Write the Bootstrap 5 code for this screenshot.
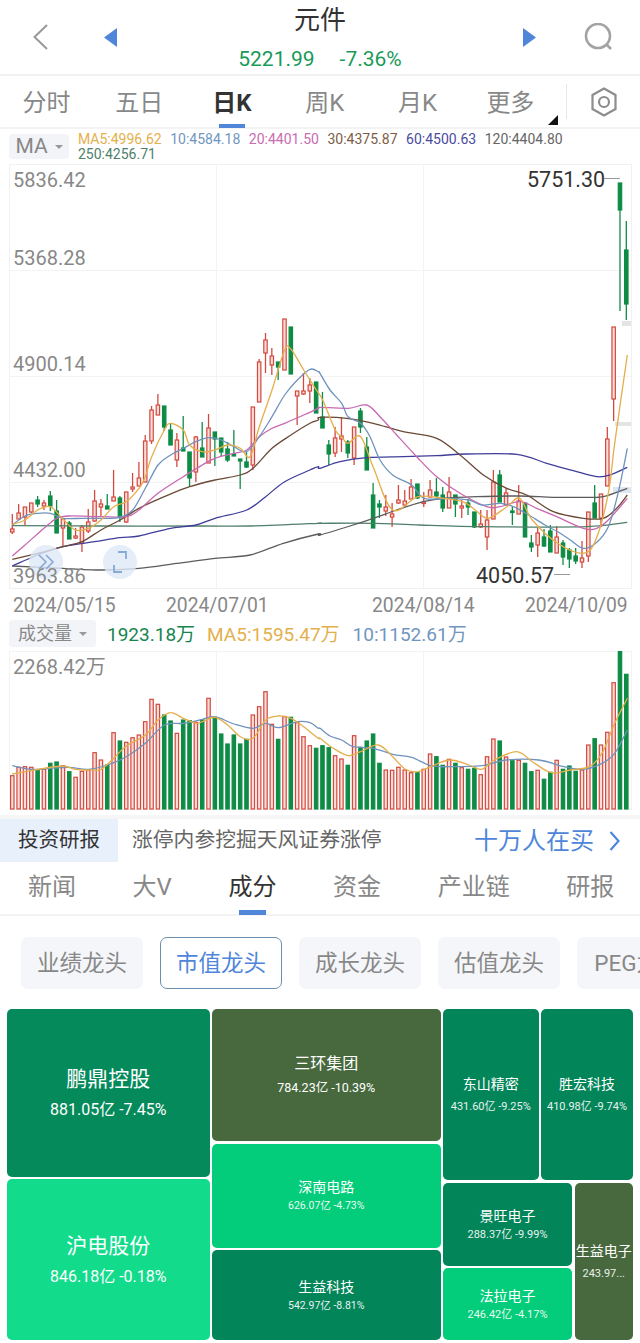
<!DOCTYPE html>
<html lang="zh">
<head>
    <meta charset="UTF-8">
    <meta name="viewport" content="width=device-width, initial-scale=1.0">
    <title>元件 - 日K</title>
    <link href="https://cdn.jsdelivr.net/npm/bootstrap@5.3.0/dist/css/bootstrap.min.css" rel="stylesheet">
    <style>
        html, body { width: 640px; height: 1343px; overflow: hidden; background: #fff; }
        body { font-family: Roboto, "Noto Sans CJK SC", sans-serif; color: #333; }

        .top-head { height: 76px; padding: 0 28px 0 33px; border-bottom: 2px solid #f1f1f1; }
        .top-mid { flex: 1 1 0; text-align: center; }
        .top-title { font-size: 26px; line-height: 30px; padding-top: 5px; }
        .top-quote { font-size: 21px; line-height: 24px; margin-top: 12px; color: #189a58; }
        .top-quote span + span { margin-left: 25px; }
        .tri-left { margin-left: 56px; }
        .search-ico { margin-left: 48px; }

        .period-row { height: 53px; border-bottom: 2px solid #f3f3f3; }
        .period-tab { width: 92.8px; height: 51px; line-height: 54px; text-align: center; font-size: 24px; color: #888; position: relative; }
        .period-on { color: #333; font-weight: 700; }
        .period-on::after { content: ""; position: absolute; left: 33px; bottom: -1px; width: 26px; height: 4px; background: #4f86d9; }
        .period-more::after { content: ""; position: absolute; right: -1px; bottom: 2px; border-style: solid; border-width: 0 0 10px 10px; border-color: transparent transparent #111 transparent; }
        .period-sep { width: 1px; height: 35px; margin-left: 9px; background: #e8e8e8; }
        .hex-ico { margin-left: 24px; }

        .ma-row { height: 35px; padding: 5px 0 0 9px; }
        .pick-btn { background: #f3f4f8; border-radius: 4px; color: #888; display: flex; align-items: center; justify-content: center; gap: 7px; }
        .pick-ma { width: 60px; height: 25px; font-size: 21px; }
        .pick-caret { width: 0; height: 0; border-style: solid; border-width: 4px 4px 0 4px; border-color: #999 transparent transparent transparent; }
        .ma-vals { width: 540px; margin-left: 9px; column-gap: 8.6px; font-size: 14px; line-height: 15px; margin-top: -2px; }
        .c-ma5 { color: #e3b04b; } .c-ma10 { color: #7096bf; } .c-ma20 { color: #c96cb2; }
        .c-ma30 { color: #7d5d47; } .c-ma60 { color: #4b4ba0; } .c-ma120 { color: #666; } .c-ma250 { color: #4f7f6a; }

        .chart-svg { display: block; width: 640px; }
        .chart-main { height: 425px; }
        .chart-vol { height: 159px; }
        .axis-txt { font-size: 20px; fill: #888; }
        .mark-txt { font-size: 21.5px; fill: #333; }

        .date-row { height: 30px; line-height: 34px; padding-left: 13px; font-size: 19.3px; color: #888; display: grid; grid-template-columns: 153px 206px 153px 1fr; }

        .vol-row { height: 32px; padding-left: 9px; font-size: 19px; line-height: 31px; }
        .pick-vol { width: 87px; height: 27px; font-size: 18px; margin: 1px 11px 0 0; }
        .vol-row .c-now { color: #18854f; margin-right: 12px; }
        .vol-row .c-ma5 { margin-right: 13px; }

        .promo-row { height: 47px; margin-top: 5px; border-top: 4px solid #f6f6f6; font-size: 20.8px; }
        .promo-tag { width: 118px; height: 43px; padding-left: 18px; line-height: 42px; background: #e8f0fb; color: #333; font-size: 20.5px; }
        .promo-txt { padding-left: 14px; color: #666; flex: 1 1 0; }
        .promo-buy { color: #4f86d9; font-size: 24px; margin-right: 20px; gap: 15px; }

        .sub-tabs { height: 54px; padding-left: 28px; gap: 56.6px; font-size: 24px; color: #888; line-height: 50px; border-bottom: 2px solid #f3f3f3; white-space: nowrap; }
        .sub-tab { position: relative; height: 52px; }
        .sub-on { color: #333; }
        .sub-on::after { content: ""; position: absolute; left: 11px; bottom: -1px; width: 27px; height: 5px; background: #4f86d9; }

        .chip-row { height: 93px; padding: 21px 0 0 21px; gap: 17px; overflow: hidden; }
        .chip { flex: 0 0 122px; height: 52px; line-height: 52px; text-align: center; font-size: 22.5px; color: #888; background: #f5f6f9; border-radius: 7px; white-space: nowrap; overflow: hidden; }
        .chip-on { color: #4f86d9; background: #fff; border: 1px solid #6b8fae; line-height: 50px; }

        .tree-map { height: 331px; padding-left: 7px; gap: 2.5px; }
        .tree-col { gap: 2.5px; }
        .col-a { width: 202.5px; } .col-b { width: 228.5px; } .col-c { width: 190px; }
        .tree-pair { gap: 2.5px; }
        .cell { border-radius: 5px; color: #fff; text-align: center; white-space: nowrap; overflow: hidden; }
        .cell b { font-weight: 400; display: block; }
        .cell i { font-style: normal; display: block; }
        .sz-lg b { font-size: 21px; line-height: 26px; margin-bottom: 8px; }
        .sz-lg i { font-size: 16px; line-height: 20px; }
        .sz-md b { font-size: 16px; line-height: 20px; margin-bottom: 6px; }
        .sz-md i { font-size: 12.5px; line-height: 16px; }
        .sz-sm b { font-size: 14px; line-height: 18px; margin-bottom: 3px; }
        .sz-sm i { font-size: 11px; line-height: 14px; opacity: .9; }
        .sz-sm.gap-wide b { margin-bottom: 7px; }
        .sz-sm.sub-tiny i { font-size: 10.5px; }
        .bg-deep { background: #048a5b; }
        .bg-deep2 { background: #03855a; }
        .bg-bright { background: #12dc8c; }
        .bg-mid { background: #03cd7a; }
        .bg-olive { background: #47693d; }
        .h-a1 { height: 167.5px; } .h-a2 { height: 161px; }
        .h-b1 { height: 132px; } .h-b2 { height: 104px; } .h-b3 { height: 90px; }
        .h-c1 { height: 171px; } .h-c2 { height: 157.5px; }
        .h-d1 { height: 83px; } .h-d2 { height: 72px; }
        .w-e1 { width: 95.5px; } .w-e2 { width: 92px; }
        .w-f1 { width: 129px; } .w-f2 { width: 58.5px; }
    </style>
</head>
<body>
    <!-- Header -->
    <header class="top-head d-flex align-items-center">
        <svg width="15" height="26" viewBox="0 0 15 26"><polyline points="14,1 1.5,13 14,25" fill="none" stroke="#999" stroke-width="2"/></svg>
        <svg class="tri-left" width="13" height="19" viewBox="0 0 13 19"><polygon points="13,0 13,19 0,9.5" fill="#4f86d9"/></svg>
        <div class="top-mid align-self-start">
            <div class="top-title">元件</div>
            <div class="top-quote"><span>5221.99</span><span>-7.36%</span></div>
        </div>
        <svg width="13" height="19" viewBox="0 0 13 19"><polygon points="0,0 0,19 13,9.5" fill="#4f86d9"/></svg>
        <svg class="search-ico" width="28" height="28" viewBox="0 0 28 28"><circle cx="14" cy="13" r="12" fill="none" stroke="#a3a3a3" stroke-width="2.6"/><path d="M22 21l5 5" stroke="#a3a3a3" stroke-width="2.6"/></svg>
    </header>

    <!-- Period tabs -->
    <div class="period-row d-flex align-items-center">
        <div class="period-tab">分时</div>
        <div class="period-tab">五日</div>
        <div class="period-tab period-on">日K</div>
        <div class="period-tab">周K</div>
        <div class="period-tab">月K</div>
        <div class="period-tab period-more">更多</div>
        <div class="period-sep"></div>
        <svg class="hex-ico" width="26" height="30" viewBox="0 0 26 30"><polygon points="13,1.5 24.5,8 24.5,22 13,28.5 1.5,22 1.5,8" fill="none" stroke="#8d8d8d" stroke-width="2.2"/><circle cx="13" cy="15" r="5" fill="none" stroke="#8d8d8d" stroke-width="2.2"/></svg>
    </div>

    <!-- MA -->
    <div class="ma-row d-flex align-items-start">
        <div class="pick-btn pick-ma">MA<span class="pick-caret"></span></div>
        <div class="ma-vals d-flex flex-wrap">
            <span class="c-ma5">MA5:4996.62</span>
            <span class="c-ma10">10:4584.18</span>
            <span class="c-ma20">20:4401.50</span>
            <span class="c-ma30">30:4375.87</span>
            <span class="c-ma60">60:4500.63</span>
            <span class="c-ma120">120:4404.80</span>
            <span class="c-ma250">250:4256.71</span>
        </div>
    </div>

    <!-- K chart -->
    <svg id="kline" class="chart-svg chart-main" viewBox="0 164 640 425">
        <rect x="9.5" y="164.5" width="622" height="424" fill="#fff" stroke="#f1f1f1"/>
        <path d="M9 270.5H631M9 376.5H631M9 482.5H631M216.5 164V588M423.5 164V588" stroke="#f3f3f3" fill="none"/>
        <rect x="622" y="321" width="9" height="5" fill="#e4e4e4"/>
        <rect x="615" y="422" width="16" height="4" fill="#e4e4e4"/>
        <rect x="613" y="487" width="18" height="6" fill="#dfe6f2"/>
        <g id="kline-bars"></g>
        <g id="kline-lines"></g>
        <circle cx="46" cy="562" r="17" fill="#dfe9f8" fill-opacity=".8"/>
        <path d="M39 555l7 7-7 7M46 555l7 7-7 7" fill="none" stroke="#86a9d6" stroke-width="1.6"/>
        <circle cx="120" cy="562" r="17" fill="#dfe9f8" fill-opacity=".8"/>
        <path d="M114 565v7h8M126 559v-7h-8" fill="none" stroke="#86a9d6" stroke-width="1.8"/>
        <text class="axis-txt" x="13" y="187">5836.42</text>
        <text class="axis-txt" x="13" y="265">5368.28</text>
        <text class="axis-txt" x="13" y="371">4900.14</text>
        <text class="axis-txt" x="13" y="477">4432.00</text>
        <text class="axis-txt" x="13" y="583">3963.86</text>
        <text class="mark-txt" x="527" y="187">5751.30</text>
        <path d="M604 178.5H620" stroke="#999"/>
        <text class="mark-txt" x="476" y="583">4050.57</text>
        <path d="M554 574.5H570" stroke="#999"/>
    </svg>
    <div class="date-row">
        <span>2024/05/15</span><span>2024/07/01</span><span>2024/08/14</span><span>2024/10/09</span>
    </div>

    <!-- Volume -->
    <div class="vol-row d-flex align-items-start">
        <div class="pick-btn pick-vol">成交量<span class="pick-caret"></span></div>
        <span class="c-now">1923.18万</span>
        <span class="c-ma5">MA5:1595.47万</span>
        <span class="c-ma10">10:1152.61万</span>
    </div>
    <svg id="vol" class="chart-svg chart-vol" viewBox="0 651 640 159">
        <rect x="9.5" y="651.5" width="622" height="158" fill="#fff" stroke="#f3f3f3"/>
        <path d="M216.5 651V809M423.5 651V809" stroke="#f3f3f3" fill="none"/>
        <g id="vol-bars"></g>
        <g id="vol-lines"></g>
        <text class="axis-txt" x="13" y="674">2268.42万</text>
    </svg>

    <!-- Promo -->
    <div class="promo-row d-flex align-items-center">
        <div class="promo-tag">投资研报</div>
        <div class="promo-txt">涨停内参挖掘天风证券涨停</div>
        <div class="promo-buy d-flex align-items-center">十万人在买
            <svg width="11" height="20" viewBox="0 0 11 20"><polyline points="1.5,1 9.5,10 1.5,19" fill="none" stroke="#4f86d9" stroke-width="2.2"/></svg>
        </div>
    </div>

    <!-- Sub tabs -->
    <div class="sub-tabs d-flex">
        <div class="sub-tab">新闻</div>
        <div class="sub-tab">大V</div>
        <div class="sub-tab sub-on">成分</div>
        <div class="sub-tab">资金</div>
        <div class="sub-tab">产业链</div>
        <div class="sub-tab">研报</div>
    </div>

    <!-- Chips -->
    <div class="chip-row d-flex">
        <div class="chip">业绩龙头</div>
        <div class="chip chip-on">市值龙头</div>
        <div class="chip">成长龙头</div>
        <div class="chip">估值龙头</div>
        <div class="chip">PEG龙头</div>
    </div>

    <!-- Treemap -->
    <div class="tree-map d-flex">
        <div class="tree-col col-a d-flex flex-column">
            <div class="cell sz-lg bg-deep h-a1 d-flex flex-column justify-content-center"><b>鹏鼎控股</b><i>881.05亿 -7.45%</i></div>
            <div class="cell sz-lg bg-bright h-a2 d-flex flex-column justify-content-center"><b>沪电股份</b><i>846.18亿 -0.18%</i></div>
        </div>
        <div class="tree-col col-b d-flex flex-column">
            <div class="cell sz-md bg-olive h-b1 d-flex flex-column justify-content-center"><b>三环集团</b><i>784.23亿 -10.39%</i></div>
            <div class="cell sz-sm sub-tiny bg-mid h-b2 d-flex flex-column justify-content-center"><b>深南电路</b><i>626.07亿 -4.73%</i></div>
            <div class="cell sz-sm sub-tiny bg-deep2 h-b3 d-flex flex-column justify-content-center"><b>生益科技</b><i>542.97亿 -8.81%</i></div>
        </div>
        <div class="tree-col col-c d-flex flex-column">
            <div class="tree-pair h-c1 d-flex">
                <div class="cell sz-sm gap-wide bg-deep2 w-e1 d-flex flex-column justify-content-center"><b>东山精密</b><i>431.60亿 -9.25%</i></div>
                <div class="cell sz-sm gap-wide bg-deep2 w-e2 d-flex flex-column justify-content-center"><b>胜宏科技</b><i>410.98亿 -9.74%</i></div>
            </div>
            <div class="tree-pair h-c2 d-flex">
                <div class="tree-col w-f1 d-flex flex-column">
                    <div class="cell sz-sm bg-deep2 h-d1 d-flex flex-column justify-content-center"><b>景旺电子</b><i>288.37亿 -9.99%</i></div>
                    <div class="cell sz-sm bg-mid h-d2 d-flex flex-column justify-content-center"><b>法拉电子</b><i>246.42亿 -4.17%</i></div>
                </div>
                <div class="cell sz-sm gap-wide bg-olive w-f2 d-flex flex-column justify-content-center"><b>生益电子</b><i>243.97...</i></div>
            </div>
        </div>
    </div>

    <script src="https://cdn.jsdelivr.net/npm/bootstrap@5.3.0/dist/js/bootstrap.bundle.min.js"></script>
    <script>
        const RED = '#d2493f', PINK = '#fbdcd6', GREEN = '#0e8c46';
        const xOf = i => 12.3 + 6.33 * i;

        // [r/g, wick top, body top, body bottom, wick bottom]
        const candles = [
            ['r',514,529,532,534],['r',504,513,519,519],['r',507,507,517,525],['r',503,503,512,513],['g',496,500,504,507],
            ['r',500,503,506,510],['g',491,496,506,511],['g',500,511,533,533],['r',519,519,528,546],['g',521,523,539,539],
            ['r',528,536,538,539],['r',525,527,543,552],['r',509,522,531,533],['r',490,501,521,522],['r',499,504,507,517],
            ['g',494,506,509,509],['r',470,497,501,501],['g',496,498,517,522],['r',492,492,522,523],['r',473,487,489,492],
            ['r',462,478,486,486],['r',435,441,482,482],['r',406,410,441,444],['r',394,405,415,415],['g',406,406,427,431],
            ['g',423,430,445,445],['r',433,440,460,467],['g',416,448,451,451],['g',452,452,478,486],['r',436,437,472,482],
            ['g',422,448,457,457],['r',414,428,463,463],['g',432,432,439,466],['g',438,438,452,456],['g',442,449,460,462],
            ['g',430,454,456,456],['g',459,459,461,489],['g',452,462,467,468],['r',407,407,465,470],['r',359,362,402,402],
            ['r',333,340,353,373],['r',348,356,365,375],['g',362,362,367,380],['r',319,319,370,370],['g',327,327,374,374],
            ['r',391,391,396,425],['r',373,391,394,395],['r',378,385,391,403],['g',382,382,413,413],['g',392,417,428,428],
            ['g',440,445,454,465],['r',427,438,453,457],['r',417,436,439,452],['g',440,442,453,458],['r',427,427,458,465],
            ['g',408,411,427,433],['g',437,447,470,470],['g',483,495,528,528],['g',500,504,507,518],['r',495,507,511,516],
            ['r',503,514,517,527],['r',485,500,503,504],['r',490,501,505,507],['r',479,487,499,499],['g',484,484,498,499],
            ['r',492,502,503,507],['r',480,490,497,497],['g',478,492,496,497],['g',487,495,508,512],['r',477,492,508,508],
            ['g',495,495,504,517],['r',500,506,508,518],['g',499,503,507,515],['g',512,512,527,528],['r',510,524,527,528],
            ['r',510,520,537,550],['r',470,482,519,519],['g',470,475,502,502],['r',488,493,505,505],['g',507,511,512,525],
            ['r',485,501,514,514],['g',503,503,537,537],['g',535,543,547,552],['r',528,533,545,557],['g',529,537,546,547],
            ['g',525,531,552,552],['r',526,537,553,553],['g',540,543,557,565],['g',548,550,559,568],['g',548,556,561,564],
            ['r',541,558,562,568],['r',512,512,556,562],['g',485,503,518,518],['r',494,494,518,527],['r',427,439,486,486],
            ['r',327,327,399,421],['g',183,183,210,311],['g',221,250,304,320]
        ];

        const volTops = [
            775.7,767.3,766.7,767.3,770.7,769.3,763.3,762,765.7,771.7,777.3,771.3,770,752.7,760,765,732.7,741,742.3,737.7,
            735,721.7,699.3,704.3,715,721,733.3,720,720.7,722.3,720,698.3,717.3,734,744,735,744,739.3,715,706.7,
            691.7,724.3,739.3,716.7,717.3,722.7,736.7,745.7,748.3,745.7,747.7,755.7,759,765.3,735.7,747.3,741,734,763.3,770,
            770.3,767.3,770,772.7,772.7,769.3,754,756.7,765.3,759.3,763.3,767.7,769.3,768.3,774.7,756.7,739,741,757,760.7,
            760.3,763.3,771.7,770.3,779.3,772.3,760.3,769.3,766,771.3,770,745,738.7,745,732.3,682.7,650.7,674.3
        ];

        // line points were read from 3x crops, left and right half
        const kL = pts => pts.map(p => [p[0] / 3, 280 + p[1] / 3]);
        const kR = pts => pts.map(p => [320 + p[0] / 3, 160 + p[1] / 3]);
        const vL = pts => pts.map(p => [p[0] / 3, 610 + p[1] / 3]);
        const vR = pts => pts.map(p => [320 + p[0] / 3, 610 + p[1] / 3]);

        const kLines = [
            ['#4f7f6a', [...kL([[37,737],[300,738],[600,738],[750,738],[955,730]]), ...kR([[0,1090],[160,1090],[300,1095],[500,1100],[800,1100],[922,1087]])]],
            ['#5c5c5c', [...kL([[37,858],[189,865],[303,870],[417,865],[530,850],[645,835],[750,825],[850,790],[955,762]]), ...kR([[0,1125],[90,1098],[160,1075],[230,1050],[310,1025],[370,1015],[470,1010],[600,1008],[700,1012],[800,1012],[850,1010],[922,985]])]],
            ['#3e3e9a', [...kL([[37,858],[113,825],[189,800],[284,785],[360,773],[417,768],[512,745],[588,735],[645,715],[740,690],[797,650],[854,605],[930,570],[955,560]]), ...kR([[0,925],[60,905],[140,893],[250,890],[350,887],[440,882],[590,883],[680,910],[760,932],[830,950],[870,945],[922,922]])]],
            ['#6b4a36', [...kL([[37,838],[113,820],[189,800],[246,785],[303,750],[360,720],[417,685],[493,650],[569,620],[645,600],[721,585],[759,565],[816,505],[873,465],[930,430],[955,420]]), ...kR([[0,772],[80,775],[160,790],[250,815],[350,835],[420,885],[490,945],[560,985],[620,1005],[700,1055],[790,1075],[850,1075],[890,1045],[922,1005]])]],
            ['#c868b0', [...kL([[37,828],[75,795],[132,745],[170,715],[208,708],[303,710],[379,710],[417,690],[474,640],[550,590],[607,555],[645,535],[702,520],[740,510],[778,470],[816,445],[854,430],[911,405],[955,385]]), ...kR([[0,742],[85,745],[140,735],[180,770],[230,825],[290,890],[350,950],[420,1000],[500,1040],[540,1040],[600,1025],[650,1045],[710,1070],[790,1105],[830,1105],[865,1080],[922,1015]])]],
            ['#6f93bd', [...kL([[37,735],[75,708],[113,700],[151,700],[189,715],[246,715],[303,715],[360,712],[398,690],[436,625],[474,555],[512,525],[550,505],[588,485],[626,473],[664,480],[702,500],[740,515],[778,470],[816,410],[854,345],[892,300],[930,268],[955,275]]), ...kR([[0,640],[30,690],[65,730],[84,770],[122,790],[150,830],[180,900],[218,945],[275,975],[313,1015],[389,1015],[447,1020],[485,1035],[542,1030],[580,1040],[618,1060],[675,1095],[713,1115],[751,1140],[789,1165],[827,1150],[865,1100],[894,1000],[922,865]])]],
            ['#e5ae4a', [...kL([[37,733],[75,720],[113,690],[151,680],[189,718],[227,750],[265,745],[303,720],[341,680],[379,665],[417,625],[436,590],[455,530],[493,450],[512,430],[550,450],[569,495],[607,515],[645,510],[683,495],[721,505],[750,530],[778,440],[816,330],[854,210],[873,208],[911,270],[949,330]]), ...kR([[8,720],[46,810],[65,830],[84,850],[122,830],[161,925],[218,1050],[294,1010],[370,1015],[428,1025],[466,1050],[504,1075],[561,1040],[599,1015],[637,1080],[713,1150],[789,1180],[827,1140],[865,1000],[884,850],[922,585]])]]
        ];

        const vLines = [
            ['#6f93bd', [...vL([[37,467],[94,478],[151,475],[208,472],[265,478],[322,465],[379,440],[436,400],[493,345],[550,340],[607,328],[645,320],[702,342],[759,355],[797,340],[835,353],[892,335],[930,338],[955,355]]), ...vR([[0,355],[30,378],[65,390],[100,410],[160,415],[218,433],[275,442],[332,467],[389,470],[485,467],[560,450],[656,450],[732,470],[789,478],[846,460],[884,430],[922,360]])]],
            ['#e5ae4a', [...vL([[37,492],[94,482],[132,475],[189,468],[227,478],[265,480],[303,478],[341,445],[379,408],[436,375],[474,330],[512,308],[550,325],[588,340],[607,335],[645,322],[683,345],[721,380],[759,385],[797,330],[835,318],[873,325],[911,350],[955,385]]), ...vR([[0,385],[40,415],[85,437],[122,425],[175,405],[218,440],[256,478],[294,485],[332,470],[389,450],[447,465],[485,478],[523,450],[590,425],[637,455],[694,488],[751,480],[808,470],[846,430],[884,340],[922,265]])]]
        ];

        // catmull-rom through the points, so the MA curves come out smooth
        function smoothPath(pts) {
            let d = `M${pts[0][0].toFixed(1)} ${pts[0][1].toFixed(1)}`;
            for (let i = 0; i < pts.length - 1; i++) {
                const p0 = pts[Math.max(i - 1, 0)], p1 = pts[i], p2 = pts[i + 1], p3 = pts[Math.min(i + 2, pts.length - 1)];
                const c1x = p1[0] + (p2[0] - p0[0]) / 6, c1y = p1[1] + (p2[1] - p0[1]) / 6;
                const c2x = p2[0] - (p3[0] - p1[0]) / 6, c2y = p2[1] - (p3[1] - p1[1]) / 6;
                d += `C${c1x.toFixed(1)} ${c1y.toFixed(1)} ${c2x.toFixed(1)} ${c2y.toFixed(1)} ${p2[0].toFixed(1)} ${p2[1].toFixed(1)}`;
            }
            return d;
        }

        function drawLines(id, lines) {
            document.getElementById(id).innerHTML = lines.map(([color, pts]) =>
                `<path d="${smoothPath(pts)}" fill="none" stroke="${color}" stroke-width="1.3" stroke-linejoin="round"/>`
            ).join('');
        }

        function drawCandles() {
            document.getElementById('kline-bars').innerHTML = candles.map((c, i) => {
                const x = xOf(i), red = c[0] === 'r', col = red ? RED : GREEN;
                const h = Math.max(c[3] - c[2], 1.5);
                return `<path d="M${x} ${c[1]}V${c[4]}" stroke="${col}" stroke-width="1.3"/>` +
                    `<rect x="${x - 1.7}" y="${c[2]}" width="3.4" height="${h}" fill="${red ? PINK : GREEN}" stroke="${col}" stroke-width="1.2"/>`;
            }).join('');
        }

        function drawVolume() {
            document.getElementById('vol-bars').innerHTML = candles.map((c, i) => {
                const x = xOf(i), red = c[0] === 'r', col = red ? RED : GREEN;
                return `<rect x="${x - 1.7}" y="${volTops[i]}" width="3.4" height="${809 - volTops[i]}" fill="${red ? PINK : GREEN}" stroke="${col}" stroke-width="1.2"/>`;
            }).join('');
        }

        drawCandles();
        drawLines('kline-lines', kLines);
        drawVolume();
        drawLines('vol-lines', vLines);
    </script>
</body>
</html>
